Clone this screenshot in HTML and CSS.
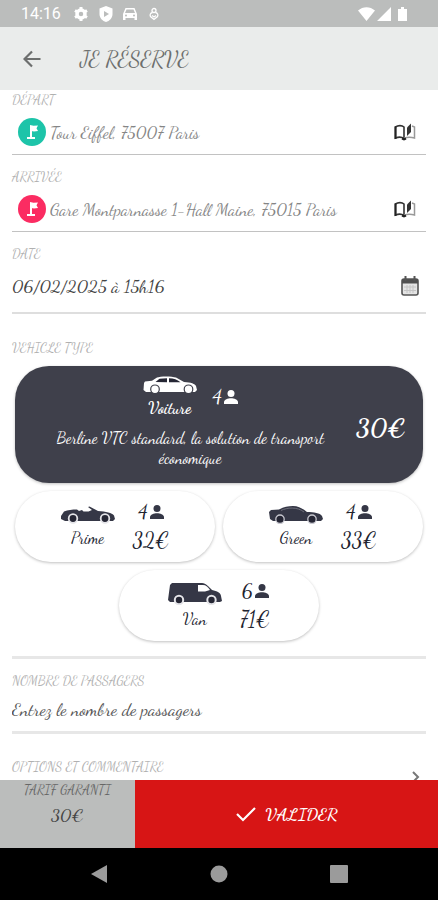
FILE: index.html
```html
<!DOCTYPE html>
<html lang="fr">
<head>
<meta charset="utf-8">
<meta name="viewport" content="width=device-width, initial-scale=1">
<title>Je réserve</title>
<link rel="stylesheet" href="styles.css">
</head>
<body>
<svg class="defs" aria-hidden="true">
  <symbol id="flag" viewBox="0 0 28 28"><path d="M13 8v12M9 20h8" fill="none" stroke="currentColor" stroke-width="2"/><path d="M12 7l3.500.8 4.500-.3-1.500 2.800 1.500 2.700-4 .5-4-.8z" fill="currentColor"/></symbol>
  <symbol id="book" viewBox="0 0 22 18"><path d="M1.500 15V4C4 2.200 8 2.200 10 4v11.500C8 14 4 14 1.500 15z" fill="none" stroke="#333" stroke-width="1.600"/><path d="M10 15.500c3-1.500 7-1.500 10.500-.5V4L18 3" fill="none" stroke="#999" stroke-width="1.500"/><path d="M1.500 3.500V16M8 15.500l2 1 2-1" fill="none" stroke="#222" stroke-width="2"/><path d="M13 4.500L17 .5v8.500L13 13z" fill="#333"/></symbol>
  <symbol id="person" viewBox="0 0 14 14"><circle cx="7" cy="3.500" r="3.500" fill="currentColor"/><path d="M0 14v-2c0-2.500 4-3.800 7-3.800s7 1.300 7 3.800v2z" fill="currentColor"/></symbol>
  <symbol id="sedan" viewBox="0 0 54 18"><path d="M1 7l1-1.500 7-.8L14 1.500C17 0 29 0 33 1.500L41 6c7 .3 11 2 12 4l1 4-2 2H3l-2.500-2z" fill="currentColor"/><path d="M12.500 6l4-3.200 7.500-.6v4zM26 2.200c5 0 8 1.500 11.500 4H26z" fill="#252634"/><g fill="#fff" stroke="#3f404b" stroke-width="1.200"><circle cx="12" cy="13.300" r="4.300"/><circle cx="45.500" cy="13.300" r="4.300"/></g></symbol>
  <symbol id="cabrio" viewBox="0 0 54 18"><path d="M0 10l3-4.500c4-1.500 8-2 13-2l2 1.500 3-1 1.500 1.500h5L31 4l-4-3 1.500-.5L37 5c8 .3 14 2 16 4.500l1 3.500-2 2H4l-4-2z" fill="currentColor"/><g fill="#252634" stroke="#e4e4e8" stroke-width="1.800"><circle cx="12" cy="12.500" r="4.300"/><circle cx="44" cy="12.500" r="4.300"/></g></symbol>
  <symbol id="coupe" viewBox="0 0 54 18"><path d="M0 6l2-2 8-.5C15 .5 19 0 24 0c6 0 10 3 14 6 7 0 13 1 15 4l1 3-2 2H4l-3-2z" fill="currentColor"/><path d="M12 4.500C18 1.500 28 .5 35 6" fill="none" stroke="#6d6e7a"/><g fill="#252634" stroke="#c8c8d0" stroke-width="1.300"><circle cx="11" cy="13.200" r="4.200"/><circle cx="43" cy="13.200" r="4.200"/></g></symbol>
  <symbol id="van" viewBox="0 0 54 22"><path d="M0 17L2 2l2-2h30c4 0 7 4 10 7 5 1 9 3 9 6l1 5-2 1H2z" fill="currentColor"/><path d="M30 2h5c3 0 5 2 7 5l-5 1.500h-7z" fill="#fff"/><g fill="#252634" stroke="#e4e4e8" stroke-width="2"><circle cx="11" cy="17" r="4.200"/><circle cx="43.500" cy="17" r="4.200"/></g></symbol>
</svg>
<div class="screen">
  <div class="status">
    <span class="clock">14:16</span>
    <svg width="16" height="16" viewBox="0 0 16 16"><g fill="none" stroke="#fff"><circle cx="8" cy="8" r="4" stroke-width="3.500"/><path d="M8 1v3M8 12v3M2 4.500L4.500 6M11.500 10l2.500 1.500M2 11.500L4.500 10M11.500 6L14 4.500" stroke-width="3"/></g></svg>
    <svg class="shield" width="14" height="16" viewBox="0 0 14 16"><path d="M7 0l6.500 2.500V8c0 4-3 7-6.500 8C3.500 15 .5 12 .5 8V2.500z" fill="#fff"/><path d="M5 5l5 3-5 3z" fill="#bbbdbc"/></svg>
    <svg width="14" height="14" viewBox="0 0 14 14"><path d="M2.500 1h9L14 7v6h-2.500v-2h-9v2H0V7z" fill="#fff"/><path d="M3.500 2.500h7L12 6H2z" fill="#bbbdbc"/><circle cx="3" cy="8.500" r="1" fill="#bbbdbc"/><circle cx="11" cy="8.500" r="1" fill="#bbbdbc"/></svg>
    <svg class="pin" width="10" height="14" viewBox="0 0 10 14"><g fill="none" stroke="#fff" stroke-width="1.300"><circle cx="5" cy="3.500" r="2"/><path d="M3.500 5.500C1 6 .8 8 1.500 9.500L5 12.500l3.500-3C9.200 8 9 6 6.500 5.500M3 8.500l2 1.500 2-1.500"/></g></svg>
    <svg class="signal" width="50" height="16" viewBox="0 0 50 16"><path d="M0 4.500C5 0 12 0 17 4.500L8.500 15zM19 15L33 1v14zM40 3h3V1h3v2h3v12h-9z" fill="#fff"/></svg>
  </div>
  <header class="appbar">
    <button class="icon-btn" aria-label="Retour"><svg width="18" height="18" viewBox="0 0 18 18"><path d="M17.500 9H2M9 1.500L1.500 9 9 16.500" fill="none" stroke="#6d6f6e" stroke-width="2.200"/></svg></button>
    <h1>JE RÉSERVE</h1>
  </header>
  <main>
    <div class="field first">
      <label for="from">DÉPART</label>
      <div class="row">
        <svg class="badge green" width="28" height="28"><use href="#flag"/></svg>
        <input id="from" class="address" value="Tour Eiffel, 75007 Paris">
        <button class="icon-btn book" aria-label="Carnet d'adresses"><svg width="22" height="18"><use href="#book"/></svg></button>
      </div>
    </div>
    <div class="field">
      <label for="to">ARRIVÉE</label>
      <div class="row">
        <svg class="badge pink" width="28" height="28"><use href="#flag"/></svg>
        <input id="to" class="address" value="Gare Montparnasse 1-Hall Maine, 75015 Paris">
        <button class="icon-btn book" aria-label="Carnet d'adresses"><svg width="22" height="18"><use href="#book"/></svg></button>
      </div>
    </div>
    <div class="field date">
      <label for="date">DATE</label>
      <div class="row">
        <input id="date" value="06/02/2025 à 15h16">
        <button class="icon-btn calendar" aria-label="Calendrier"><svg width="18" height="20" viewBox="0 0 18 20"><rect x="1" y="3" width="16" height="16" rx="2" fill="#e4e4e4" stroke="#555" stroke-width="1.600"/><path d="M1 3h16v4.500H1z" fill="#505050"/><path d="M4.500 0v5M13.500 0v5" stroke="#555" stroke-width="2"/><path d="M3 11h12M3 14.500h12M6 9v8M9 9v8M12 9v8" stroke="#c4c4c4"/></svg></button>
      </div>
    </div>
    <section class="vehicles">
      <h2>VEHICLE TYPE</h2>
      <div class="cards">
        <button class="card selected" aria-pressed="true">
          <span class="body">
            <span class="pair">
              <span class="model"><svg width="54" height="18"><use href="#sedan"/></svg><b>Voiture</b></span>
              <span class="seats">4<svg width="14" height="14"><use href="#person"/></svg></span>
            </span>
            <span class="desc">Berline VTC standard, la solution de transport économique</span>
          </span>
          <span class="price">30€</span>
        </button>
        <button class="card">
          <span class="model"><svg width="54" height="18"><use href="#cabrio"/></svg>Prime</span>
          <span class="info"><span class="seats">4<svg width="14" height="14"><use href="#person"/></svg></span><span class="price">32€</span></span>
        </button>
        <button class="card">
          <span class="model"><svg width="54" height="18"><use href="#coupe"/></svg>Green</span>
          <span class="info"><span class="seats">4<svg width="14" height="14"><use href="#person"/></svg></span><span class="price">33€</span></span>
        </button>
        <button class="card">
          <span class="model"><svg width="54" height="22"><use href="#van"/></svg>Van</span>
          <span class="info"><span class="seats">6<svg width="14" height="14"><use href="#person"/></svg></span><span class="price">71€</span></span>
        </button>
      </div>
    </section>
    <div class="field passengers">
      <label for="count">NOMBRE DE PASSAGERS</label>
      <input id="count" placeholder="Entrez le nombre de passagers">
    </div>
    <button class="options">
      <span>OPTIONS ET COMMENTAIRE</span>
      <svg width="8" height="12" viewBox="0 0 8 12"><path d="M1 1l5 5-5 5" fill="none" stroke="#777" stroke-width="2"/></svg>
    </button>
  </main>
  <footer>
    <div class="fare"><span>TARIF GARANTI</span><strong>30€</strong></div>
    <button class="submit"><svg width="22" height="16" viewBox="0 0 22 16"><path d="M2 8l6 6L20 2" fill="none" stroke="#fff" stroke-width="2.200"/></svg>VALIDER</button>
  </footer>
  <nav>
    <button aria-label="Précédent"><svg width="18" height="20" viewBox="0 0 18 20"><path d="M1 10L17 1v18z" fill="#9b9b9b"/></svg></button>
    <button aria-label="Accueil"><svg width="18" height="20" viewBox="0 0 18 20"><circle cx="9" cy="10" r="8.500" fill="#9b9b9b"/></svg></button>
    <button aria-label="Récents"><svg width="18" height="20" viewBox="0 0 18 20"><rect y="1" width="18" height="18" rx="1" fill="#9b9b9b"/></svg></button>
  </nav>
</div>
</body>
</html>
```
FILE: styles.css
```css
* { box-sizing: border-box; }
body {
  margin: 0;
  background: #fff;
  color: #222;
  font-family: "Dancing Script", cursive;
  font-size: 16px;
}
button, input {
  font: inherit;
  color: inherit;
  background: none;
  border: 0;
  padding: 0;
}
svg { display: block; flex: none; }
.defs { position: absolute; width: 0; height: 0; }
.screen { display: flex; flex-direction: column; height: 100vh; }

.status {
  display: flex;
  align-items: center;
  height: 27px;
  flex: none;
  padding: 0 30px 0 21px;
  background: #bbbdbc;
  color: #fff;
}
.clock { font: 16px/27px Roboto, sans-serif; margin-right: 12px; }
.shield { margin: 0 10px; }
.pin { margin-left: 12px; }
.signal { margin-left: auto; }

.appbar {
  display: flex;
  align-items: center;
  gap: 39px;
  height: 63px;
  flex: none;
  padding: 0 23px;
  background: #eaeceb;
  color: #6d6f6e;
}
.appbar h1 { margin: 0; font-size: 22px; font-weight: 400; }

main {
  flex: 1;
  min-height: 0;
  overflow: auto;
  scrollbar-width: none;
  padding: 0 12px;
}
.field { padding-top: 12px; border-bottom: 1px solid #c2c2c2; }
.field.first { padding-top: 0; }
.field label, h2, .options {
  display: block;
  margin: 0;
  font-size: 13px;
  font-weight: 400;
  line-height: 20px;
  color: #b0b0b0;
}
.row { display: flex; align-items: center; height: 44px; padding: 0 6px; }
.row input { flex: 1; min-width: 0; }
.badge { border-radius: 50%; color: #fff; }
.green { background: #1dc4a9; }
.pink { background: #fb2c62; }
.address { margin-left: 4px; font-size: 17px; color: #858585; }
.book { margin-right: 4px; }
.date { padding-bottom: 4px; border-bottom: 2px solid #dedede; }
.date .row { padding-left: 0; }
.date input { font-size: 18px; color: #444; }
.calendar { margin-right: 1px; }

.vehicles { padding: 24px 0 15px; border-bottom: 3px solid #e7e7e7; }
.cards {
  display: flex;
  flex-wrap: wrap;
  justify-content: center;
  gap: 8px;
  padding: 8px 3px 0;
}
.card {
  display: flex;
  align-items: center;
  justify-content: center;
  gap: 18px;
  width: calc(50% - 4px);
  height: 71px;
  border-radius: 36px;
  background: #fff;
  box-shadow: 0 1px 3px rgba(0, 0, 0, .25);
  color: #20222e;
}
.card svg { color: #353746; }
.model, .info, .body { display: flex; flex-direction: column; align-items: center; }
.model { line-height: 20px; gap: 4px; }
.info { gap: 2px; padding-top: 2px; }
.seats { display: flex; align-items: center; gap: 2px; font-size: 20px; line-height: 24px; }
.price { font-size: 21px; line-height: 30px; }
.selected {
  width: 100%;
  height: 117px;
  gap: 10px;
  padding: 0 17px 0 20px;
  border-radius: 34px;
  background: #3f404b;
  color: #fff;
}
.selected svg { color: #fff; }
.selected .body { flex: 1; gap: 10px; padding-bottom: 6px; }
.selected .price { padding-top: 6px; font-size: 26px; font-weight: 700; }
.pair { display: flex; align-items: center; gap: 16px; }
.desc { line-height: 20px; }

.passengers { border-bottom: 3px solid #e7e7e7; }
.passengers input {
  display: block;
  width: 100%;
  height: 36px;
  margin-bottom: 4px;
  font-size: 18px;
}
.passengers input::placeholder { color: #555; opacity: 1; }
.options {
  display: flex;
  justify-content: space-between;
  width: 100%;
  padding: 23px 6px 14px 0;
  text-align: left;
}
.options svg { margin-top: 14px; }

footer { display: flex; height: 68px; flex: none; }
.fare {
  display: flex;
  flex: 4;
  flex-direction: column;
  align-items: center;
  background: #bbbdbc;
  color: #666;
  font-size: 13px;
  line-height: 20px;
}
.fare strong { font-size: 18px; font-weight: 400; line-height: 30px; color: #444; }
.submit {
  display: flex;
  align-items: center;
  justify-content: center;
  gap: 8px;
  flex: 9;
  background: #d71515;
  color: #fff;
  font-size: 17px;
  font-weight: 700;
}
nav {
  display: flex;
  align-items: center;
  justify-content: center;
  gap: 102px;
  height: 52px;
  flex: none;
  background: #000;
}
```
